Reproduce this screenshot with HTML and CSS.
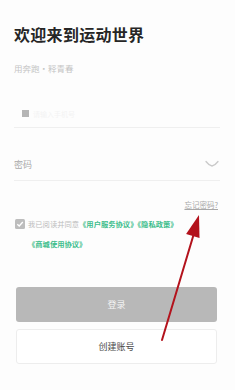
FILE: index.html
```html
<!DOCTYPE html>
<html lang="zh-CN">
<head>
<meta charset="utf-8">
<link rel="stylesheet" href="styles.css">
</head>
<body>
<div class="page">
  <h1 class="title">欢迎来到运动世界</h1>
  <p class="subtitle">用奔跑·释青春</p>

  <div class="field phone">
    <span class="flag"></span>
    <span class="phone-text">请输入手机号</span>
  </div>

  <div class="field password">
    <span class="label">密码</span>
    <svg class="eye" width="14" height="8" viewBox="0 0 14 8"><path d="M1 1.5 Q4 5.5 7 6 Q10 5.5 13 1.5" fill="none" stroke="#cacaca" stroke-width="1.3" stroke-linecap="round"/></svg>
  </div>

  <div class="forgot-row"><span class="forgot">忘记密码?</span></div>

  <div class="agree">
    <span class="check"><svg width="10" height="10" viewBox="0 0 10 10"><path d="M2.3 5.2 L4.2 7 L7.8 3" fill="none" stroke="#fff" stroke-width="1.3"/></svg></span>
    <p class="agree-text">我已阅读并同意<span class="link">《用户服务协议》《隐私政策》</span><br><span class="link">《商城使用协议》</span></p>
  </div>

  <button class="btn login">登录</button>
  <button class="btn create">创建账号</button>
</div>
<svg class="arrow" width="235" height="390" viewBox="0 0 235 390">
  <line x1="162" y1="340" x2="195" y2="230" stroke="#b3121c" stroke-width="2" stroke-linecap="round"/>
  <polygon points="199,215 199.5,238 186.1,234" fill="#b3121c"/>
</svg>
</body>
</html>
```
FILE: styles.css
```css
html, body {
  margin: 0;
  padding: 0;
  background: #fdfdfd;
}
body {
  font-family: "Noto Sans CJK SC", "Noto Sans", sans-serif;
  width: 235px;
  height: 390px;
  position: relative;
  overflow: hidden;
}
.page {
  padding: 24px 15px 0 14px;
  display: flex;
  flex-direction: column;
}
.title {
  margin: 0;
  font-size: 16px;
  line-height: 20px;
  font-weight: 700;
  color: #262626;
  letter-spacing: 0.3px;
}
.subtitle {
  margin: 18px 0 0;
  font-size: 8.5px;
  line-height: 12px;
  color: #c4c4c4;
}
.field {
  display: flex;
  align-items: center;
  border-bottom: 1px solid #efefef;
}
.phone {
  margin-top: 26px;
  height: 27px;
  padding-left: 8px;
}
.flag {
  width: 7px;
  height: 7px;
  background: #b5b5b5;
}
.phone-text {
  margin-left: 4px;
  font-size: 7px;
  color: #f3f3f3;
}
.password {
  margin-top: 20px;
  height: 32px;
  justify-content: space-between;
}
.label {
  font-size: 9px;
  color: #a9a9a9;
}
.eye {
  margin-right: 1px;
}
.forgot-row {
  margin-top: 18px;
  display: flex;
  justify-content: flex-end;
  padding-right: 2px;
}
.forgot {
  font-size: 7.5px;
  line-height: 12px;
  color: #a8a8a8;
  text-decoration: underline;
}
.agree {
  margin-top: 3px;
  display: flex;
  align-items: flex-start;
  padding-left: 1px;
}
.check {
  flex: none;
  width: 10px;
  height: 10px;
  margin-top: 5px;
  border-radius: 1.5px;
  background: #bdbdbd;
  display: flex;
}
.agree-text {
  margin: 0 0 0 3px;
  font-size: 7.3px;
  line-height: 20px;
  color: #bcbcbc;
}
.link {
  color: #3dbd8c;
  font-weight: 700;
}
.btn {
  display: block;
  font-family: inherit;
  width: 201px;
  height: 35px;
  margin-left: 2px;
  border-radius: 3px;
  font-size: 9px;
  padding: 0;
}
.login {
  margin-top: 33px;
  background: #b8b8b8;
  border: none;
  color: #f4f4f4;
}
.create {
  margin-top: 7px;
  background: #fff;
  border: 1px solid #ededed;
  color: #4a4a4a;
}
.arrow {
  position: absolute;
  left: 0;
  top: 0;
  pointer-events: none;
}
```
